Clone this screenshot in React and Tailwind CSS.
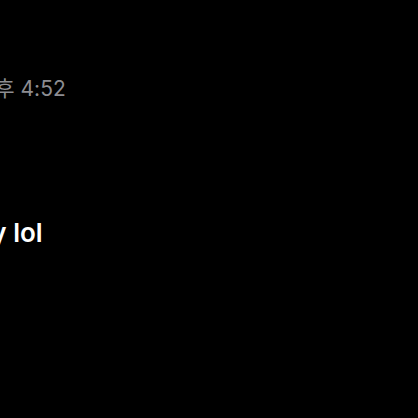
export default function App() {
  return (
    <div className="w-[418px] h-[418px] bg-black overflow-hidden" style={{ fontFamily: 'Inter, "Noto Sans CJK KR", sans-serif' }}>
      {/* timestamp, cut off on the left */}
      <div className="pt-[75px] -ml-[24px] whitespace-nowrap">
        <span className="text-[21px] leading-[28px] text-[#8d8d92]">오후 4:52</span>
      </div>

      {/* message */}
      <div className="mt-[114px] -ml-[58px] whitespace-nowrap">
        <span className="text-[26px] leading-[32px] font-semibold text-white">Okay lol</span>
      </div>
    </div>
  );
}
